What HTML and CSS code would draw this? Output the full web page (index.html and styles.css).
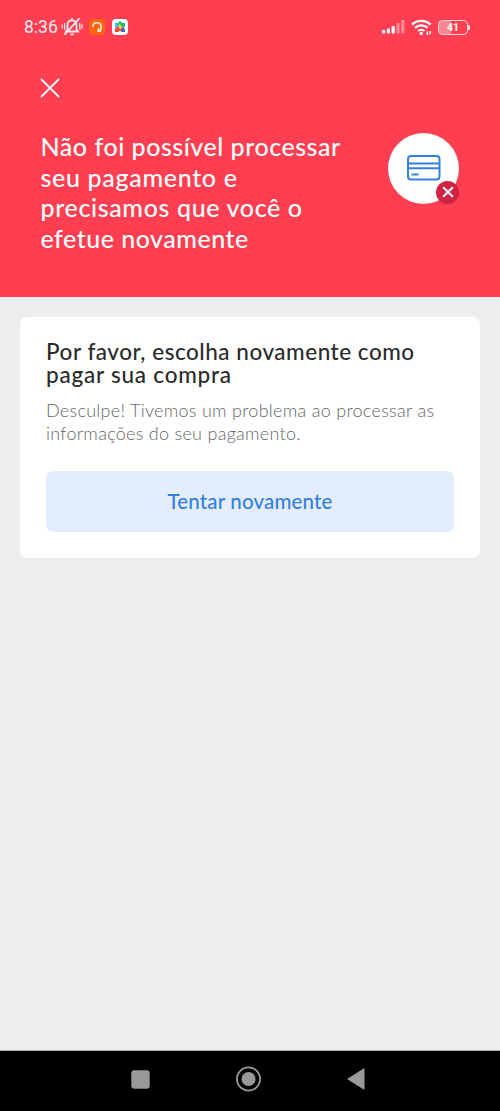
FILE: index.html
```html
<!DOCTYPE html>
<html lang="pt-BR">

<head>
    <meta charset="UTF-8">
    <meta name="viewport" content="width=device-width, initial-scale=1.0">
    <title>Pagamento</title>
    <link rel="stylesheet" href="styles.css">
</head>

<body>
    <header class="header">
        <div class="status-bar">
            <span class="time">8:36</span>
            <svg class="bell" width="22" height="20" viewBox="0 0 22 20" fill="none" stroke="#ffe9ec" stroke-width="1.8" stroke-linecap="round">
                <path d="M5 14.5h12l-1.5-2V8c0-3-1.9-4.6-4.5-4.6S6.5 5 6.5 8v4.5zM10 17.4h2M11 1.8v1M18 1.8L4 17.2" />
                <path d="M1.2 8v3M3.7 6.5v5.8M18.8 6.5v5.8M21 8v3" stroke-width="1.3" />
            </svg>
            <svg class="app-orange" width="16" height="16" viewBox="0 0 16 16">
                <rect width="16" height="16" rx="4" fill="#ff6410" />
                <path d="M3.8 8a4.2 4.2 0 1 1 6 3.7M9.6 9.2l-.5 2.8 2.9.2" fill="none" stroke="#fff0e4" stroke-width="1.5" />
            </svg>
            <svg class="app-white" width="16" height="16" viewBox="0 0 16 16">
                <rect width="16" height="16" rx="4" fill="#fff" />
                <path d="M3 4h3.2L8 8l-5 .5v-2l1.2-.6L3 5.5z" fill="#20b8e8" />
                <path d="M6.2 4a1.8 1.8 0 1 1 3.6 0H13v3L8 8.5z" fill="#18bd65" />
                <path d="M13 7l-1.5 1.5L13 10v3H9.5L8 8z" fill="#3f6fc9" />
                <path d="M3 13V9.8L5 8h3l2 5-2-1.2L6 13z" fill="#f04444" />
                <path d="M6 7l2-2 2.5 3.5L8 10.5z" fill="#ffd21c" />
            </svg>
            <span class="spacer"></span>
            <svg width="23" height="14" viewBox="0 0 23 14" fill="#fff">
                <rect x="0" y="10" width="3.2" height="3.5" rx="1" />
                <rect x="4.8" y="8.5" width="3.2" height="5" rx="1" />
                <rect x="9.6" y="6" width="3.2" height="7.5" rx="1" />
                <rect x="14.4" y="3" width="3.2" height="10.5" rx="1" opacity=".4" />
                <rect x="19.2" y="0" width="3.2" height="13.5" rx="1" opacity=".4" />
            </svg>
            <svg class="wifi" width="22" height="17" viewBox="0 0 22 17" fill="none" stroke="#fff" stroke-width="2.2">
                <path d="M1 5.6a13.4 13.4 0 0 1 18.6 0M4 8.9a9 9 0 0 1 12.6 0M7 12a5 5 0 0 1 6.6 0" />
                <circle cx="10.3" cy="14.5" r="1.7" fill="#fff" stroke="none" />
                <path d="M16.3 12.5v3.6M19 12v3.6" stroke-width="1.5" />
            </svg>
            <span class="battery"><span class="battery-text">41</span></span>
            <span class="battery-tip"></span>
        </div>
        <svg class="close" width="20" height="20" viewBox="0 0 20 20" stroke="#fff" stroke-width="1.8">
            <path d="M1 1l18 18M19 1L1 19" />
        </svg>
        <div class="header-row">
            <h1>
                <span class="h-1">Não foi possível processar</span><br>
                <span class="h-2">seu pagamento e</span><br>
                <span class="h-3">precisamos que você o</span><br>
                <span class="h-4">efetue novamente</span>
            </h1>
            <div class="card-icon">
                <svg width="34" height="26" viewBox="0 0 34 26" fill="none" stroke="#357fe2" stroke-width="2">
                    <rect x="1" y="1" width="31.5" height="23.5" rx="3" />
                    <path d="M1 8.5h31.5M1 13.2h31.5M4.5 19.5h7" />
                </svg>
                <span class="error-badge">
                    <svg width="12" height="12" viewBox="0 0 12 12" stroke="#fff" stroke-width="2">
                        <path d="M1.2 1.2l9.6 9.6M10.8 1.2L1.2 10.8" />
                    </svg>
                </span>
            </div>
        </div>
    </header>

    <main>
        <section class="card">
            <h2>
                <span class="t-1">Por favor, escolha novamente como</span><br>
                <span class="t-2">pagar sua compra</span>
            </h2>
            <p>
                Desculpe! Tivemos um problema ao processar as<br>
                informações do seu pagamento.
            </p>
            <button type="button">Tentar novamente</button>
        </section>
    </main>

    <nav class="nav-bar">
        <svg width="19" height="19" viewBox="0 0 19 19">
            <rect x=".3" y=".3" width="18.4" height="18.4" rx="3" fill="#999" />
        </svg>
        <svg width="26" height="26" viewBox="0 0 26 26">
            <circle cx="12.5" cy="13" r="11.6" fill="none" stroke="#999" stroke-width="1.8" />
            <circle cx="12.5" cy="13" r="7" fill="#999" />
        </svg>
        <svg width="18" height="22" viewBox="0 0 18 22">
            <path d="M.8 11L17 .8v20.4z" fill="#999" stroke="#999" stroke-linejoin="round" />
        </svg>
    </nav>
</body>

</html>
```
FILE: styles.css
```css
* {
    box-sizing: border-box;
}

body {
    margin: 0;
    height: 1111px;
    display: flex;
    flex-direction: column;
    background-color: #ededed;
    font-family: Lato, "Open Sans", sans-serif;
}

h1,
h2,
p {
    margin: 0;
    white-space: nowrap;
}

svg {
    display: block;
    flex-shrink: 0;
}

.header {
    height: 297px;
    background-color: #ff3f51;
    color: #fff;
}

.status-bar {
    display: flex;
    align-items: center;
    height: 54px;
    padding: 0 30px 0 24px;
}

.time {
    width: 37px;
    font: 17.5px/20px Roboto, sans-serif;
    color: #ffe9ec;
}

.app-orange {
    margin-left: 6px;
}

.app-white {
    margin-left: 7px;
}

.spacer {
    flex: 1;
}

.wifi {
    margin-left: 6px;
}

.battery {
    display: flex;
    align-items: center;
    justify-content: center;
    width: 30px;
    height: 15px;
    margin-left: 5px;
    border: 1.5px solid #ffd9dd;
    border-radius: 4.5px;
    background: linear-gradient(to right, #ff8792 42%, transparent 42%);
}

.battery-text {
    font: bold 10.5px/13px Roboto, sans-serif;
}

.battery-tip {
    width: 2px;
    height: 5px;
    border-radius: 0 1px 1px 0;
    background-color: #ffd9dd;
}

.close {
    margin: 24px 0 0 40px;
}

.header-row {
    display: flex;
    justify-content: space-between;
    padding: 33px 41px 0 40.5px;
}

h1 {
    font-size: 25px;
    line-height: 30.6px;
    font-weight: 500;
}

.h-1 {
    letter-spacing: 0.53px;
}

.h-2 {
    letter-spacing: 0.68px;
}

.h-3 {
    letter-spacing: 0.64px;
}

.h-4 {
    letter-spacing: 0.5px;
}

.card-icon {
    position: relative;
    display: flex;
    align-items: center;
    justify-content: center;
    width: 71px;
    height: 71px;
    margin-top: 1.5px;
    border-radius: 50%;
    background-color: #fff;
}

.error-badge {
    position: absolute;
    right: 0;
    bottom: 0;
    display: flex;
    align-items: center;
    justify-content: center;
    width: 23px;
    height: 23px;
    border-radius: 50%;
    background-color: #d02344;
}

main {
    flex: 1;
    padding: 20px 20px 0;
}

.card {
    height: 241px;
    padding: 23px 26px 0;
    border-radius: 7px;
    background-color: #fff;
    box-shadow: 0 1px 1px rgba(0, 0, 0, 0.03);
}

h2 {
    font-size: 22.5px;
    line-height: 23px;
    font-weight: 500;
    color: #2b2b2b;
}

.t-1 {
    letter-spacing: 0.52px;
}

.t-2 {
    letter-spacing: 0.77px;
}

p {
    margin-top: 13px;
    font-size: 18px;
    line-height: 23px;
    font-weight: 300;
    letter-spacing: 0.28px;
    color: #666;
}

button {
    display: block;
    width: 100%;
    height: 61px;
    margin-top: 26px;
    padding: 0 0 1px;
    border: 0;
    border-radius: 7px;
    background-color: #e3edfb;
    color: #357fe2;
    font-family: inherit;
    font-size: 20.5px;
    font-weight: 500;
    letter-spacing: 0.15px;
}

.nav-bar {
    display: flex;
    align-items: center;
    justify-content: space-between;
    height: 61px;
    padding: 0 135px 4px 131px;
    border-top: 1px solid #a9adad;
    background-color: #000;
}
```
